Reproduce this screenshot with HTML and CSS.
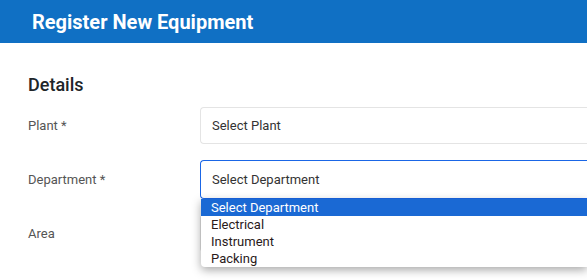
FILE: index.html
```html
<!DOCTYPE html>
<html lang="en">
<head>
    <meta charset="UTF-8">
    <meta name="viewport" content="width=device-width, initial-scale=1.0">
    <title>Register New Equipment</title>
    <link rel="stylesheet" href="styles.css">
</head>
<body>
    <div class="header">Register New Equipment</div>
    <div class="content">
        <h2 class="section-title">Details</h2>
        <div class="form">
            <label class="label">Plant *</label>
            <div class="field">
                <div class="select">Select Plant</div>
            </div>

            <label class="label">Department *</label>
            <div class="field">
                <div class="select focused">Select Department</div>
                <ul class="dropdown">
                    <li class="option active">Select Department</li>
                    <li class="option">Electrical</li>
                    <li class="option">Instrument</li>
                    <li class="option">Packing</li>
                </ul>
            </div>

            <label class="label">Area</label>
            <div class="field">
                <div class="select"></div>
            </div>
        </div>
    </div>
</body>
</html>
```

FILE: styles.css
```css
html, body {
    margin: 0;
    padding: 0;
    overflow: hidden;
}
body {
    font-family: Roboto, "Liberation Sans", sans-serif;
    background-color: #fff;
    color: #333;
    width: 587px;
    height: 280px;
}
.header {
    height: 43px;
    display: flex;
    align-items: center;
    padding-left: 32px;
    background-color: #1070c4;
    color: #fff;
    font-size: 20px;
    font-weight: 700;
}
.content {
    padding-left: 28px;
}
.section-title {
    margin: 32px 0 0;
    font-size: 18px;
    font-weight: 500;
    line-height: 20px;
    color: #212529;
}
.form {
    display: grid;
    grid-template-columns: 172px 1fr;
    row-gap: 16px;
    margin-top: 12px;
    align-items: center;
}
.label {
    font-size: 13px;
    color: #555;
}
.field {
    position: relative;
}
/* the fields run on past the right edge of the window */
.select {
    height: 37px;
    box-sizing: border-box;
    display: flex;
    align-items: center;
    padding-left: 11px;
    border: 1px solid #e4e4e4;
    border-right: none;
    border-radius: 4px 0 0 4px;
    font-size: 13px;
    color: #333;
}
.select.focused {
    height: 39px;
    border-color: #1a66e6;
}
.dropdown {
    position: absolute;
    left: 1px;
    right: 0;
    top: 39px;
    margin: 0;
    padding: 0;
    list-style: none;
    background-color: #fff;
    border-radius: 0 0 0 4px;
    box-shadow: 0 3px 10px rgba(0, 0, 0, 0.35);
    z-index: 2;
}
.option {
    height: 17px;
    line-height: 17px;
    padding-left: 10px;
    font-size: 13px;
    color: #2a1a1a;
}
.option.active {
    background-color: #1a69d4;
    color: #fff;
}
```
